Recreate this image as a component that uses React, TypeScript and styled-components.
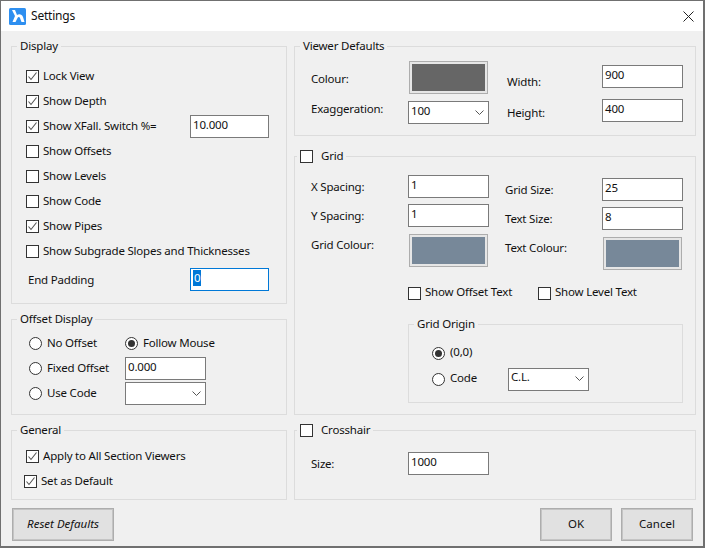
import React from "react";
import styled, { createGlobalStyle } from "styled-components";

const Global = createGlobalStyle`
  html, body { margin: 0; padding: 0; background: #f0f0f0; }
  body { font-family: "Noto Sans", "Open Sans", sans-serif; font-size: 11.5px; letter-spacing: -0.2px; color: #111; }
  * { box-sizing: border-box; }
`;

const Window = styled.div`
  width: 705px; height: 548px; background: #f0f0f0;
  border-style: solid; border-color: #707070; border-width: 1px 2px 2px 1px;
  display: flex; flex-direction: column;
`;
const TitleBar = styled.div`
  height: 30px; background: #fff; display: flex; align-items: center; padding: 0 9px 0 8px; flex: none;
`;
const TitleText = styled.span`margin-left: 5px; line-height: 16px; font-size: 12px;`;
const CloseIcon = styled.svg`margin-left: auto; width: 11px; height: 11px; display: block;`;
const Content = styled.div`
  display: grid; grid-template-columns: 276px 402px; column-gap: 7px; padding: 15px 0 0 10px;
`;
const Column = styled.div`display: flex; flex-direction: column;`;
const Group = styled.div<{ $h: number; $mt?: number; $pt?: number; $pl?: number }>`
  position: relative; height: ${p => p.$h}px; margin-top: ${p => p.$mt ?? 0}px;
  border: 1px solid #dcdcdc; padding: ${p => p.$pt ?? 0}px 0 0 ${p => p.$pl ?? 0}px;
`;
const Legend = styled.div<{ $left: number }>`
  position: absolute; top: -9px; left: ${p => p.$left}px; height: 16px; padding: 0 3px; line-height: 16px;
  background: #f0f0f0; display: flex; align-items: center; gap: 8px; white-space: nowrap;
`;
const CheckRow = styled.div<{ $ml?: number }>`
  height: 25px; display: flex; align-items: center; margin-left: ${p => p.$ml ?? 0}px; white-space: nowrap;
`;
const OptionText = styled.span`display: block; line-height: 16px; margin-bottom: 2px;`;
const BoxWrap = styled.span`
  width: 13px; height: 13px; border: 1px solid #333; background: #fff; flex: none; display: block; margin-right: 4px;
`;
const BoxMark = styled.svg`display: block; width: 11px; height: 11px;`;
const LegendBox = styled(BoxWrap)`margin-right: 0;`;
const RadioWrap = styled.span`
  width: 13px; height: 13px; border: 1px solid #333; border-radius: 50%; background: #fff; flex: none;
  margin-right: 5px; display: flex; align-items: center; justify-content: center;
`;
const RadioDot = styled.span`width: 7px; height: 7px; border-radius: 50%; background: #333; display: block;`;
const InputBox = styled.div<{ $w?: number; $focus?: boolean }>`
  width: ${p => p.$w ?? 81}px; height: 23px; flex: none; background: #fff;
  border: 1px solid ${p => (p.$focus ? "#0078d7" : "#7a7a7a")};
  padding: 0 0 4px 2px; display: flex; align-items: center; line-height: 16px;
`;
const Selected = styled.span`background: #0078d7; color: #fff; padding: 0 1px;`;
const Chevron = styled.svg`margin-left: auto; margin-right: 4px; margin-bottom: -3px; width: 9px; height: 5px; display: block;`;
const Swatch = styled.div<{ $c: string }>`
  width: 79px; height: 33px; flex: none; border: 1px solid #adadad; background: ${p => p.$c};
  box-shadow: inset 0 0 0 2px #e6e6e6; margin-left: 1px;
`;
const RowXF = styled.div`height: 25px; display: flex; align-items: center; padding-right: 17px; white-space: nowrap;`;
const PadRow = styled(RowXF)`margin-top: 3px; padding-left: 2px; justify-content: space-between;`;
const SwitchInput = styled(InputBox)`width: 79px; margin-left: auto;`;
const RadioGrid = styled.div`display: grid; grid-template-columns: 96px 81px; grid-auto-rows: 25px; align-items: center;`;
const RadioRow = styled.div`display: flex; align-items: center; white-space: nowrap;`;
const FieldColumns = styled.div`display: flex;`;
const FieldCol = styled.div<{ $w: number; $pt?: number }>`
  width: ${p => p.$w}px; flex: none; padding-top: ${p => p.$pt ?? 0}px; display: flex; flex-direction: column;
`;
const Field = styled.div<{ $mt?: number }>`display: flex; margin-top: ${p => p.$mt ?? 0}px;`;
const FieldLabel = styled.span<{ $w: number; $top: number }>`
  width: ${p => p.$w}px; flex: none; padding-top: ${p => p.$top}px; line-height: 16px; white-space: nowrap;
`;
const ShowRow = styled.div`display: flex; height: 20px; align-items: center; margin: 13px 0 0 97px;`;
const ShowItem = styled.div<{ $w: number }>`width: ${p => p.$w}px; display: flex; align-items: center; white-space: nowrap;`;
const OriginGroup = styled(Group)`margin: 21px 0 0 97px; width: 275px;`;
const OriginRow = styled.div`height: 26px; display: grid; grid-template-columns: 76px 81px; align-items: center;`;
const Footer = styled.div`display: flex; padding: 8px 10px 0 11px; gap: 9px;`;
const Button = styled.div<{ $w: number; $italic?: boolean }>`
  width: ${p => p.$w}px; height: 33px; border: 1px solid #adadad; background: #e1e1e1; padding-bottom: 2px;
  outline: 1px solid #c4c4c4; outline-offset: -2px; letter-spacing: 0;
  display: flex; align-items: center; justify-content: center;
  font-style: ${p => (p.$italic ? "italic" : "normal")}; margin-right: ${p => (p.$italic ? "auto" : "0")};
`;

const Tick = () => (
  <BoxMark viewBox="0 0 11 11"><path d="M1.5 5.5 L4 8.5 L9.5 1.5" fill="none" stroke="#555" strokeWidth="1.1" /></BoxMark>
);
const Check = ({ on, label, ml }: { on?: boolean; label: string; ml?: number }) => (
  <CheckRow $ml={ml}><BoxWrap>{on && <Tick />}</BoxWrap><OptionText>{label}</OptionText></CheckRow>
);
const Radio = ({ on, label }: { on?: boolean; label: string }) => (
  <RadioRow><RadioWrap>{on && <RadioDot />}</RadioWrap><OptionText>{label}</OptionText></RadioRow>
);
const ChevronDown = () => (
  <Chevron viewBox="0 0 9 5"><path d="M0.5 0.5 L4.5 4.5 L8.5 0.5" fill="none" stroke="#555" strokeWidth="1" /></Chevron>
);
const Select = ({ value }: { value?: string }) => <InputBox>{value}<ChevronDown /></InputBox>;
const Logo = () => (
  <svg width="17" height="17" viewBox="0 0 17 17" style={{ display: "block", flex: "none" }}>
    <rect width="17" height="17" rx="1.5" fill="#2e8ff0" />
    <path d="M3 2 L6 2 L8 7 C10 5.5 13 6 14 9 L15.5 14 L12.5 14 L11 10 C10.5 8.6 9 8.6 8.5 10 L6.5 14 L3.5 14 L6 8 Z" fill="#fff" />
  </svg>
);

export default function App() {
  return (
    <Window>
      <Global />
      <TitleBar>
        <Logo />
        <TitleText>Settings</TitleText>
        <CloseIcon viewBox="0 0 11 11"><path d="M0.5 0.5 L10.5 10.5 M10.5 0.5 L0.5 10.5" stroke="#222" strokeWidth="1" /></CloseIcon>
      </TitleBar>
      <Content>
        <Column>
          <Group $h={258} $pt={17} $pl={14}>
            <Legend $left={5}>Display</Legend>
            <Check on label="Lock View" />
            <Check on label="Show Depth" />
            <RowXF>
              <Check on label="Show XFall. Switch %=" />
              <SwitchInput>10.000</SwitchInput>
            </RowXF>
            <Check label="Show Offsets" />
            <Check label="Show Levels" />
            <Check label="Show Code" />
            <Check on label="Show Pipes" />
            <Check label="Show Subgrade Slopes and Thicknesses" />
            <PadRow>
              End Padding
              <InputBox $w={79} $focus><Selected>0</Selected></InputBox>
            </PadRow>
          </Group>
          <Group $h={96} $mt={15} $pt={11} $pl={17}>
            <Legend $left={5}>Offset Display</Legend>
            <RadioGrid>
              <Radio label="No Offset" />
              <Radio on label="Follow Mouse" />
              <Radio label="Fixed Offset" />
              <InputBox>0.000</InputBox>
              <Radio label="Use Code" />
              <Select />
            </RadioGrid>
          </Group>
          <Group $h={70} $mt={15} $pt={13} $pl={14}>
            <Legend $left={5}>General</Legend>
            <Check on label="Apply to All Section Viewers" />
            <Check on label="Set as Default" ml={-2} />
          </Group>
        </Column>
        <Column>
          <Group $h={90} $pt={14} $pl={16}>
            <Legend $left={5}>Viewer Defaults</Legend>
            <FieldColumns>
              <FieldCol $w={196}>
                <Field><FieldLabel $w={97} $top={10}>Colour:</FieldLabel><Swatch $c="#666666" /></Field>
                <Field $mt={7}><FieldLabel $w={97} $top={0}>Exaggeration:</FieldLabel><Select value="100" /></Field>
              </FieldCol>
              <FieldCol $w={176} $pt={4}>
                <Field><FieldLabel $w={95} $top={9}>Width:</FieldLabel><InputBox>900</InputBox></Field>
                <Field $mt={9}><FieldLabel $w={95} $top={6}>Height:</FieldLabel><InputBox>400</InputBox></Field>
              </FieldCol>
            </FieldColumns>
          </Group>
          <Group $h={259} $mt={20} $pt={18} $pl={16}>
            <Legend $left={2}><LegendBox />Grid</Legend>
            <FieldColumns>
              <FieldCol $w={194}>
                <Field><FieldLabel $w={97} $top={4}>X Spacing:</FieldLabel><InputBox>1</InputBox></Field>
                <Field $mt={6}><FieldLabel $w={97} $top={4}>Y Spacing:</FieldLabel><InputBox>1</InputBox></Field>
                <Field $mt={7}><FieldLabel $w={97} $top={3}>Grid Colour:</FieldLabel><Swatch $c="#778899" /></Field>
              </FieldCol>
              <FieldCol $w={178} $pt={3}>
                <Field><FieldLabel $w={97} $top={4}>Grid Size:</FieldLabel><InputBox>25</InputBox></Field>
                <Field $mt={6}><FieldLabel $w={97} $top={4}>Text Size:</FieldLabel><InputBox>8</InputBox></Field>
                <Field $mt={7}><FieldLabel $w={97} $top={3}>Text Colour:</FieldLabel><Swatch $c="#778899" /></Field>
              </FieldCol>
            </FieldColumns>
            <ShowRow>
              <ShowItem $w={130}><BoxWrap /><OptionText>Show Offset Text</OptionText></ShowItem>
              <ShowItem $w={130}><BoxWrap /><OptionText>Show Level Text</OptionText></ShowItem>
            </ShowRow>
            <OriginGroup $h={79} $pt={15} $pl={23}>
              <Legend $left={5}>Grid Origin</Legend>
              <OriginRow><Radio on label="(0,0)" /></OriginRow>
              <OriginRow>
                <Radio label="Code" />
                <InputBox>C.L.<ChevronDown /></InputBox>
              </OriginRow>
            </OriginGroup>
          </Group>
          <Group $h={70} $mt={15} $pt={21} $pl={16}>
            <Legend $left={2}><LegendBox />Crosshair</Legend>
            <Field><FieldLabel $w={97} $top={4}>Size:</FieldLabel><InputBox>1000</InputBox></Field>
          </Group>
        </Column>
      </Content>
      <Footer>
        <Button $w={102} $italic>Reset Defaults</Button>
        <Button $w={72}>OK</Button>
        <Button $w={72}>Cancel</Button>
      </Footer>
    </Window>
  );
}
